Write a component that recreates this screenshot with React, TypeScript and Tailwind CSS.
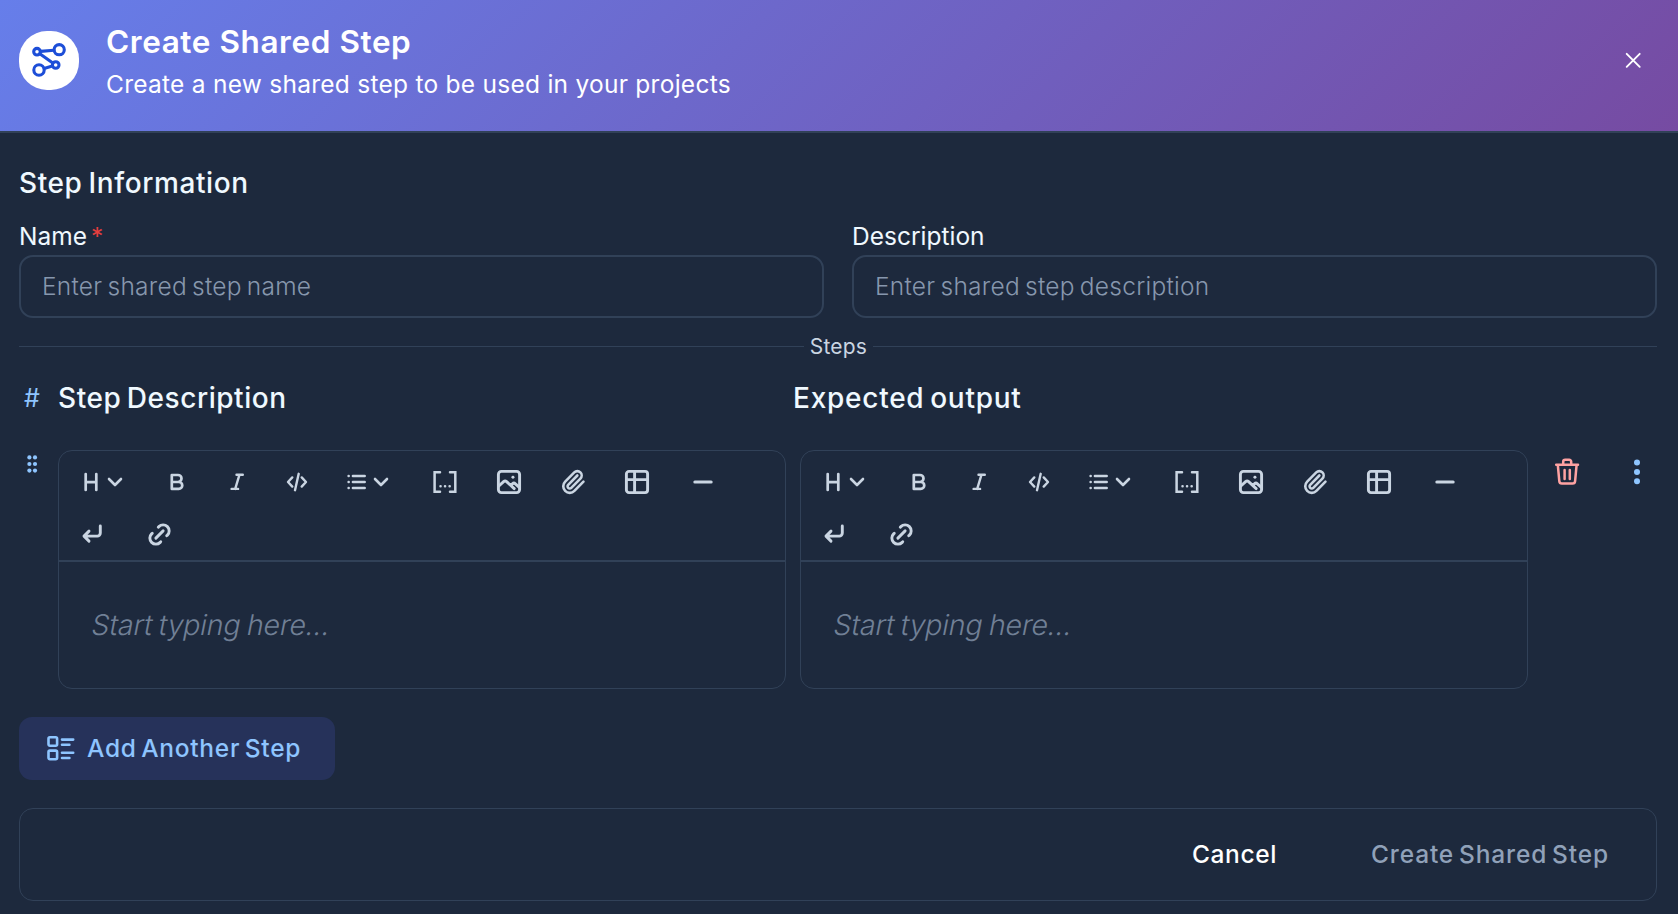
import type { ReactNode } from "react";

type IconProps = { w: number; h: number; sw?: number; className?: string; children: ReactNode };

function Icon({ w, h, sw = 2.7, className = "", children }: IconProps) {
  return (
    <svg
      width={w}
      height={h}
      viewBox={`0 0 ${w} ${h}`}
      fill="none"
      stroke="currentColor"
      strokeWidth={sw}
      strokeLinecap="round"
      strokeLinejoin="round"
      className={`shrink-0 ${className}`}
    >
      {children}
    </svg>
  );
}

function Chevron({ className = "" }: { className?: string }) {
  return (
    <Icon w={16} h={24} sw={2.6} className={className}>
      <path d="M2 9l6 6 6-6" />
    </Icon>
  );
}

function Toolbar() {
  return (
    <div className="h-[111px] border-b-2 border-slate-700 text-slate-300">
      <div className="flex h-[62px] items-center pl-[24px]">
        <button className="flex w-[40px] items-center justify-between" aria-label="Heading">
          <Icon w={16} h={24}>
            <path d="M2.7 4v16M13.3 4v16M2.7 12.2h10.6" />
          </Icon>
          <Chevron />
        </button>
        <button className="ml-[46px]" aria-label="Bold">
          <Icon w={16} h={24} sw={2.7}>
            <path d="M2.8 5h6.2a3.5 3.5 0 0 1 0 7h-6.2zM2.8 12h7a3.4 3.4 0 0 1 0 6.9h-7z" />
          </Icon>
        </button>
        <button className="ml-[44px]" aria-label="Italic">
          <Icon w={16} h={24} sw={2.4}>
            <path d="M7.5 4.7h6.3M2.6 18.9h6.5M10.5 4.7L6.2 18.9" />
          </Icon>
        </button>
        <button className="ml-[40px]" aria-label="Code">
          <Icon w={24} h={24} sw={2.4}>
            <path d="M7.3 7.4L3 12l4.3 4.6M13.7 3.8L10 20.2M16.7 7.4L21 12l-4.3 4.6" />
          </Icon>
        </button>
        <button className="ml-[37px] flex w-[43px] items-center justify-between" aria-label="List">
          <Icon w={20} h={24} sw={2.5}>
            <path d="M6.9 6h11.8M6.9 12h11.8M6.9 18h11.8M2.6 6h.1M2.6 12h.1M2.6 18h.1" />
          </Icon>
          <Chevron />
        </button>
        <button className="ml-[43px]" aria-label="Variable">
          <Icon w={26} h={26} sw={2.5}>
            <path d="M8 3.3H2.6v19.4H8M18 3.3h5.3v19.4H18" strokeLinejoin="miter" />
            <path d="M8.5 17.3h.1M13 17.3h.1M17.6 17.3h.1" />
          </Icon>
        </button>
        <button className="ml-[38px]" aria-label="Image">
          <Icon w={26} h={26} sw={2.9}>
            <rect x="2.4" y="2.4" width="21.2" height="21.2" rx="3" />
            <path d="M2.6 17.2l5-4.6c1-.9 2-.9 3 0l7.6 7M14.6 16.4l1.8-1.6c1-.9 2-.9 3 0l3.9 3.6" />
            <path d="M16.9 8.3h.1" />
          </Icon>
        </button>
        <button className="ml-[38px]" aria-label="Attachment">
          <svg width="26" height="26" viewBox="0 0 24 24" fill="none" stroke="currentColor" strokeWidth="2.4" strokeLinecap="round" strokeLinejoin="round">
            <path d="m16 6-8.414 8.586a2 2 0 0 0 2.829 2.829l8.414-8.586a4 4 0 1 0-5.657-5.657l-8.379 8.551a6 6 0 1 0 8.485 8.485l8.379-8.551" />
          </svg>
        </button>
        <button className="ml-[38px]" aria-label="Table">
          <Icon w={26} h={26} sw={2.9}>
            <rect x="2.4" y="2.4" width="21.2" height="21.2" rx="2.6" />
            <path d="M10.6 2.4v21.2M2.4 10.6h21.2" />
          </Icon>
        </button>
        <button className="ml-[41px]" aria-label="Divider">
          <Icon w={24} h={24} sw={3}>
            <path d="M3.8 12h16.4" />
          </Icon>
        </button>
      </div>
      <div className="flex h-[42px] items-center pl-[21px]">
        <button aria-label="Line break">
          <Icon w={24} h={24} sw={2.9}>
            <path d="M20.3 4v7.1a3 3 0 0 1-3 3H4M9 9.1l-5 5 5 5" />
          </Icon>
        </button>
        <button className="ml-[41px]" aria-label="Link">
          <svg width="29" height="29" viewBox="0 0 24 24" fill="none" stroke="currentColor" strokeWidth="2.4" strokeLinecap="round" strokeLinejoin="round">
            <path d="M9 15l6-6M11 6l.463-.536a5 5 0 0 1 7.071 7.072L18 13M13 18l-.397.534a5.068 5.068 0 0 1-7.127 0a4.972 4.972 0 0 1 0-7.071L6 11" />
          </svg>
        </button>
      </div>
    </div>
  );
}

function Editor() {
  return (
    <div className="h-[239px] w-[728px] shrink-0 rounded-[14px] border border-slate-700">
      <Toolbar />
      <div className="flex h-[126px] items-center pl-[33px]">
        <span className="inline-block origin-center -skew-x-[11deg] text-[28.5px] leading-8 font-light tracking-[-0.15px] text-[#718096] [word-spacing:-1.5px]">
          Start typing here...
        </span>
      </div>
    </div>
  );
}

function Field({ label, placeholder, required }: { label: string; placeholder: string; required?: boolean }) {
  return (
    <label className="flex flex-1 flex-col">
      <span className="flex h-8 text-[24.5px] leading-[33px] font-[380] text-sky-50">
        {label}
        {required && <span className="ml-[4px] text-[#e53e3e]">*</span>}
      </span>
      <input
        placeholder={placeholder}
        className="mt-[3px] h-[63px] rounded-[14px] border-2 border-slate-700 bg-transparent pb-[2px] pl-[21px] text-[24.5px] font-[350] tracking-[0.25px] text-sky-50 outline-none [word-spacing:-2px] placeholder:text-[#8797ad]"
      />
    </label>
  );
}

export default function App() {
  return (
    <div className="h-[914px] w-full overflow-hidden bg-slate-800 font-['Inter',sans-serif]">
      <header className="flex h-[133px] items-start border-b-2 border-slate-700 bg-[linear-gradient(135deg,#667eea_0%,#764ba2_100%)] bg-origin-padding pr-[36px] pl-[19px]">
        <div className="mt-[31px] h-[59px] w-[60px] shrink-0 rounded-[28px] bg-white text-[#1d4ed8]">
          <Icon w={60} h={59} sw={3.1}>
            <circle cx="18" cy="20.7" r="3.3" />
            <circle cx="40.2" cy="18.7" r="5.1" />
            <circle cx="20" cy="39" r="5.2" />
            <circle cx="36.7" cy="34" r="3.3" />
            <path d="M21.6 20.4l13.3-1.1M20.8 22.8l13 9.2M25.1 37.4l8.2-2.4" />
          </Icon>
        </div>
        <div className="mt-[22px] ml-[27px] flex flex-1 flex-col gap-[6px] text-white">
          <h1 className="text-[31.5px] leading-10 font-semibold tracking-[0.58px]">Create Shared Step</h1>
          <p className="text-[24.5px] leading-[33px] font-[380] tracking-[0.26px]">Create a new shared step to be used in your projects</p>
        </div>
        <button className="mt-[51px] text-white" aria-label="Close">
          <Icon w={18} h={18} sw={1.9}>
            <path d="M2.7 2.8l13 13M15.7 2.8l-13 13" />
          </Icon>
        </button>
      </header>

      <main className="flex flex-col pt-[34px] pr-[21px] pl-[19px]">
        <h2 className="text-[28px] leading-8 font-medium tracking-[0.6px] text-sky-50 [word-spacing:-2px]">Step Information</h2>
        <div className="mt-[21px] flex gap-[28px]">
          <Field label="Name" placeholder="Enter shared step name" required />
          <Field label="Description" placeholder="Enter shared step description" />
        </div>

        <div className="mt-[16px] flex h-[24px] items-center">
          <span className="h-px flex-1 bg-slate-700" />
          <span className="w-[69px] pt-px text-center text-[21px] leading-6 font-[380] tracking-[0.2px] text-slate-300">Steps</span>
          <span className="h-px flex-[0_0_784px] bg-slate-700" />
        </div>

        <div className="mt-[24px] flex h-8 items-center text-[28px] leading-8 font-medium text-sky-50">
          <span className="flex w-[39px] justify-start pl-[5px] text-[25px] font-normal text-blue-300">#</span>
          <h3 className="w-[735px] tracking-[0.55px] [word-spacing:-2.5px]">Step Description</h3>
          <h3 className="tracking-[0.75px] [word-spacing:-2.5px]">Expected output</h3>
        </div>

        <div className="mt-[36px] flex items-start">
          <button className="mt-[4px] w-[39px] pl-[8px] text-blue-300" aria-label="Reorder">
            <svg width="11" height="20" viewBox="0 0 11 20" fill="currentColor">
              <circle cx="2.4" cy="3.4" r="2.1" />
              <circle cx="8" cy="3.4" r="2.1" />
              <circle cx="2.4" cy="10" r="2.1" />
              <circle cx="8" cy="10" r="2.1" />
              <circle cx="2.4" cy="16.6" r="2.1" />
              <circle cx="8" cy="16.6" r="2.1" />
            </svg>
          </button>
          <Editor />
          <div className="w-[14px] shrink-0" />
          <Editor />
          <button className="mt-[7px] ml-[26px] text-red-300" aria-label="Delete step">
            <Icon w={26} h={30} sw={2.5}>
              <path d="M2.2 7.8h21.8M9.2 7.4V4.7a2 2 0 0 1 2-2h4a2 2 0 0 1 2 2v2.7M3.8 7.8l1.5 16.4a2.6 2.6 0 0 0 2.6 2.4h10.6a2.6 2.6 0 0 0 2.6-2.4L22.6 7.8" />
              <path d="M10.6 13v9M15.8 13v9" />
            </Icon>
          </button>
          <button className="mt-[9px] ml-[53px] text-blue-300" aria-label="More">
            <svg width="8" height="26" viewBox="0 0 8 26" fill="currentColor">
              <circle cx="4" cy="3.6" r="3" />
              <circle cx="4" cy="12.9" r="3" />
              <circle cx="4" cy="22.2" r="3" />
            </svg>
          </button>
        </div>

        <button className="mt-[28px] flex h-[63px] w-[316px] items-center rounded-[13px] bg-[#26325a] pl-[27px] text-[24.5px] font-medium tracking-[0.7px] whitespace-nowrap text-blue-300 [word-spacing:-2.5px]">
          <Icon w={30} h={28} sw={2.6}>
            <rect x="2.5" y="2.3" width="8.6" height="8.4" rx="1.4" />
            <rect x="2.5" y="15.6" width="8.6" height="8.6" rx="1.4" />
            <path d="M16 4.6h11.2M16 9.7h7.4M16 17.7h11.2M16 23h7.4" />
          </Icon>
          <span className="ml-[11px]">Add Another Step</span>
        </button>

        <footer className="mt-[28px] flex h-[93px] items-center justify-end rounded-[14px] border border-slate-700 pr-[47px] text-[24.5px] font-medium">
          <button className="tracking-[0.6px] text-white">Cancel</button>
          <button className="ml-[94px] tracking-[0.86px] text-slate-400 [word-spacing:-2.5px]">Create Shared Step</button>
        </footer>
      </main>
    </div>
  );
}
